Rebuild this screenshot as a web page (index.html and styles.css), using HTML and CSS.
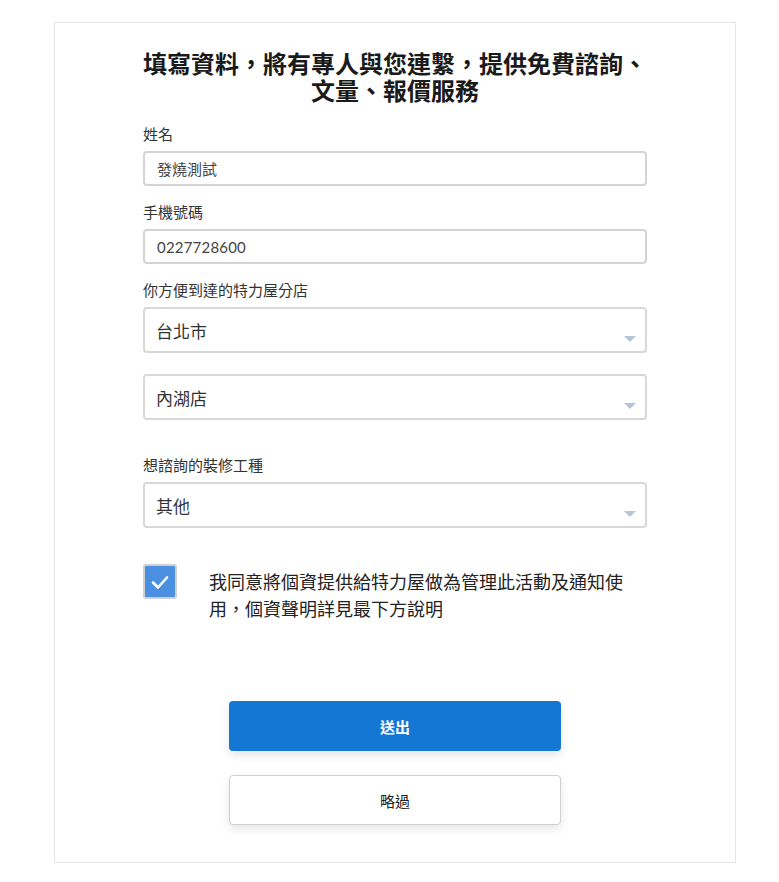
FILE: index.html
```html
<!DOCTYPE html>
<html lang="zh-Hant">
<head>
  <meta charset="UTF-8">
  <meta name="viewport" content="width=device-width, initial-scale=1.0">
  <title>免費諮詢</title>
  <link rel="stylesheet" href="styles.css">
</head>
<body>

  <div id="card">
    <h2 class="title">
      <span class="title-line">填寫資料，將有專人與您連繫，提供免費諮詢、</span>
      <span class="title-line">文量、報價服務</span>
    </h2>

    <form id="leadForm">
      <label class="label" for="name">姓名</label>
      <input class="field" type="text" id="name" value="發燒測試">

      <label class="label label-next" for="phone">手機號碼</label>
      <input class="field field-num" type="text" id="phone" value="0227728600">

      <label class="label label-next" for="city">你方便到達的特力屋分店</label>
      <div class="select-wrap">
        <select class="select" id="city">
          <option>台北市</option>
        </select>
      </div>
      <div class="select-wrap select-second">
        <select class="select" id="store">
          <option>內湖店</option>
        </select>
      </div>

      <label class="label label-work" for="work">想諮詢的裝修工種</label>
      <div class="select-wrap">
        <select class="select" id="work">
          <option>其他</option>
        </select>
      </div>

      <div class="agree">
        <span class="checkbox">
          <svg width="22" height="22" viewBox="0 0 22 22">
            <path d="M4 11.5 L9 16.5 L18 6.5" fill="none" stroke="#fff" stroke-width="2.6" stroke-linecap="round" stroke-linejoin="round"/>
          </svg>
        </span>
        <p class="agree-text">我同意將個資提供給特力屋做為管理此活動及通知使用，個資聲明詳見最下方說明</p>
      </div>

      <div class="actions">
        <button type="submit" class="btn btn-primary">送出</button>
        <button type="button" class="btn btn-skip">略過</button>
      </div>
    </form>
  </div>

</body>
</html>
```

FILE: styles.css
```css
body {
  margin: 0;
  background-color: #fff;
  font-family: "Noto Sans CJK TC", "Noto Sans", sans-serif;
  color: #222;
}

#card {
  width: 504px;
  margin: 22px 0 0 54px;
  padding: 26px 88px 37px;
  border: 1px solid #e6e6e6;
}

.title {
  margin: 0 -40px;
  font-size: 24px;
  line-height: 27px;
  font-weight: 700;
  text-align: center;
  color: #1a1a1a;
  white-space: nowrap;
}

.title-line {
  display: block;
}

.label {
  display: block;
  margin-top: 21px;
  font-size: 15px;
  line-height: 20px;
  color: #333;
}

.label-next {
  margin-top: 16px;
}

.label-work {
  margin-top: 35px;
}

.field {
  display: block;
  width: 100%;
  height: 35px;
  margin-top: 7px;
  padding: 0 12px;
  box-sizing: border-box;
  border: 2px solid #d4d4d4;
  border-radius: 4px;
  font-family: "Noto Sans CJK TC", sans-serif;
  font-size: 15px;
  color: #444;
  background: #fff;
  outline: none;
}

.field-num {
  font-family: "Lato", "Noto Sans CJK TC", sans-serif;
  letter-spacing: 0.2px;
}

.select-wrap {
  position: relative;
  margin-top: 7px;
}

.select-second {
  margin-top: 21px;
}

.select-wrap::after {
  content: "";
  position: absolute;
  right: 11px;
  bottom: 11px;
  border-left: 6px solid transparent;
  border-right: 6px solid transparent;
  border-top: 6px solid #b7c6d6;
}

.select {
  display: block;
  width: 100%;
  height: 46px;
  padding: 0 11px;
  box-sizing: border-box;
  border: 2px solid #d8d8d8;
  border-radius: 4px;
  background: #fff;
  font-family: "Noto Sans CJK TC", sans-serif;
  font-size: 17px;
  color: #333;
  appearance: none;
  -webkit-appearance: none;
  outline: none;
}

.agree {
  display: flex;
  align-items: flex-start;
  margin-top: 36px;
}

.checkbox {
  display: flex;
  align-items: center;
  justify-content: center;
  flex: none;
  width: 34px;
  height: 35px;
  box-sizing: border-box;
  border: 2px solid #d0d0d0;
  border-radius: 3px;
  background-color: #4a8fe0;
}

.agree-text {
  width: 420px;
  margin: 4px 0 0 32px;
  font-size: 18px;
  line-height: 27px;
  color: #222;
}

.actions {
  display: flex;
  flex-direction: column;
  align-items: center;
  gap: 24px;
  margin-top: 79px;
}

.btn {
  width: 332px;
  height: 50px;
  border-radius: 4px;
  font-family: "Noto Sans CJK TC", sans-serif;
  font-size: 15px;
  cursor: pointer;
  box-shadow: 0 4px 10px rgba(0, 0, 0, 0.1);
}

.btn-primary {
  border: none;
  background-color: #1477d4;
  color: #fff;
  font-weight: 700;
}

.btn-skip {
  border: 1px solid #cfcfcf;
  background-color: #fff;
  color: #222;
}
```
